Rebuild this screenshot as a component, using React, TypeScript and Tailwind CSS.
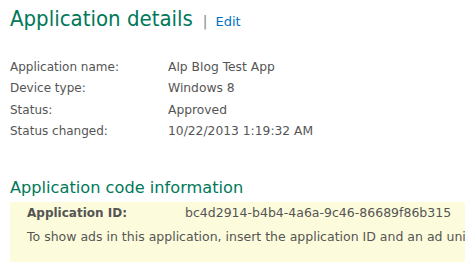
export default function App() {
  const rows: [string, string][] = [
    ["Application name:", "Alp Blog Test App"],
    ["Device type:", "Windows 8"],
    ["Status:", "Approved"],
    ["Status changed:", "10/22/2013 1:19:32 AM"],
  ];
  return (
    <div className="w-[465px] h-[276px] overflow-hidden bg-white text-[#555555]" style={{ fontFamily: '"DejaVu Sans", Verdana, sans-serif' }}>
      <div className="pl-[10px] pt-[4px] flex items-baseline whitespace-nowrap">
        <span className="text-[22px] text-[#00785a] leading-[30px] [font-family:'DejaVu_Sans_Condensed','DejaVu_Sans',sans-serif]">Application details</span>
        <span className="ml-[10px] text-[14px] text-[#888888]">|</span>
        <span className="ml-[8px] text-[13px] text-[#0072c6]">Edit</span>
      </div>
      <div className="pl-[10px] pt-[22px] flex flex-col">
        {rows.map(([k, v]) => (
          <div key={k} className="flex h-[21.5px] items-center text-[12px] whitespace-nowrap">
            <span className="w-[158px]">{k}</span>
            <span className="text-[12.3px]">{v}</span>
          </div>
        ))}
      </div>
      <div className="pl-[10px] pt-[34px] text-[16.2px] text-[#00785a] leading-[24px] whitespace-nowrap">Application code information</div>
      <div className="ml-[10px] mt-[2px] bg-[#fcfcdc] h-[60px] pl-[17px] pt-[1px] whitespace-nowrap text-[12.5px] overflow-hidden">
        <div className="flex h-[20px] items-center">
          <span className="w-[158px] font-bold text-[12px]">Application ID:</span>
          <span>bc4d2914-b4b4-4a6a-9c46-86689f86b315</span>
        </div>
        <div className="flex h-[28px] items-center">To show ads in this application, insert the application ID and an ad unit ID</div>
      </div>
    </div>
  );
}
